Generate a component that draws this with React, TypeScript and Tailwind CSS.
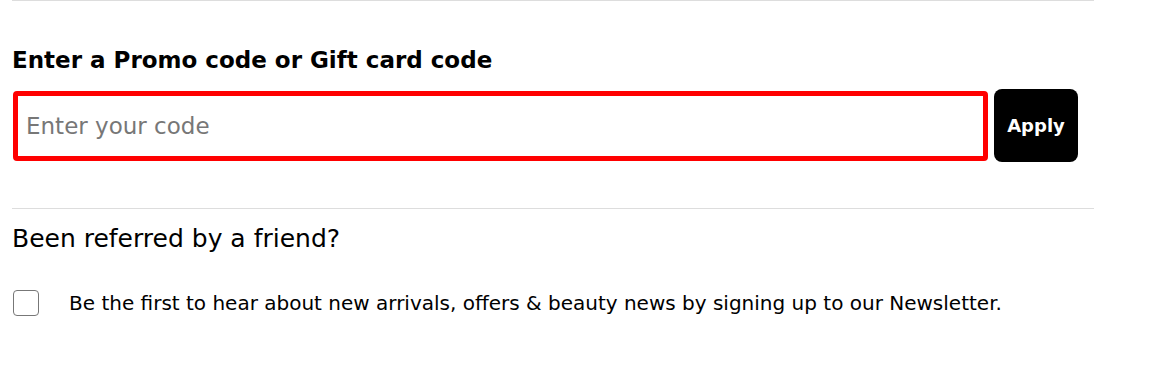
export default function App() {
  return (
    <div className="w-[1149px] h-[382px] bg-white font-['DejaVu_Sans',sans-serif] text-black">
      <div className="ml-3 w-[1082px] border-t border-[#dddddd]">
        <h2 className="pt-[45px] text-[23px] leading-[28px] font-bold">
          Enter a Promo code or Gift card code
        </h2>

        <div className="mt-[15px] flex items-center gap-[6px]">
          <input
            type="text"
            placeholder="Enter your code"
            className="ml-px h-[70px] w-[975px] rounded-[4px] border-[5px] border-[#ff0000] px-2 text-[23px] text-black placeholder:text-[#777777] outline-none"
          />
          <button className="h-[73px] w-[84px] rounded-[8px] bg-black text-[18px] font-bold text-white">
            Apply
          </button>
        </div>

        <div className="mt-[46px] border-t border-[#dddddd]" />

        <p className="mt-4 text-[25px] leading-[28px]">Been referred by a friend?</p>

        <label className="mt-[37px] flex items-center gap-[30px]">
          <span className="ml-px h-[26px] w-[26px] shrink-0 rounded-[4px] border-[1.5px] border-[#777777] bg-white" />
          <span className="text-[20px] leading-[26px]">
            Be the first to hear about new arrivals, offers &amp; beauty news by signing up to our Newsletter.
          </span>
        </label>
      </div>
    </div>
  );
}
